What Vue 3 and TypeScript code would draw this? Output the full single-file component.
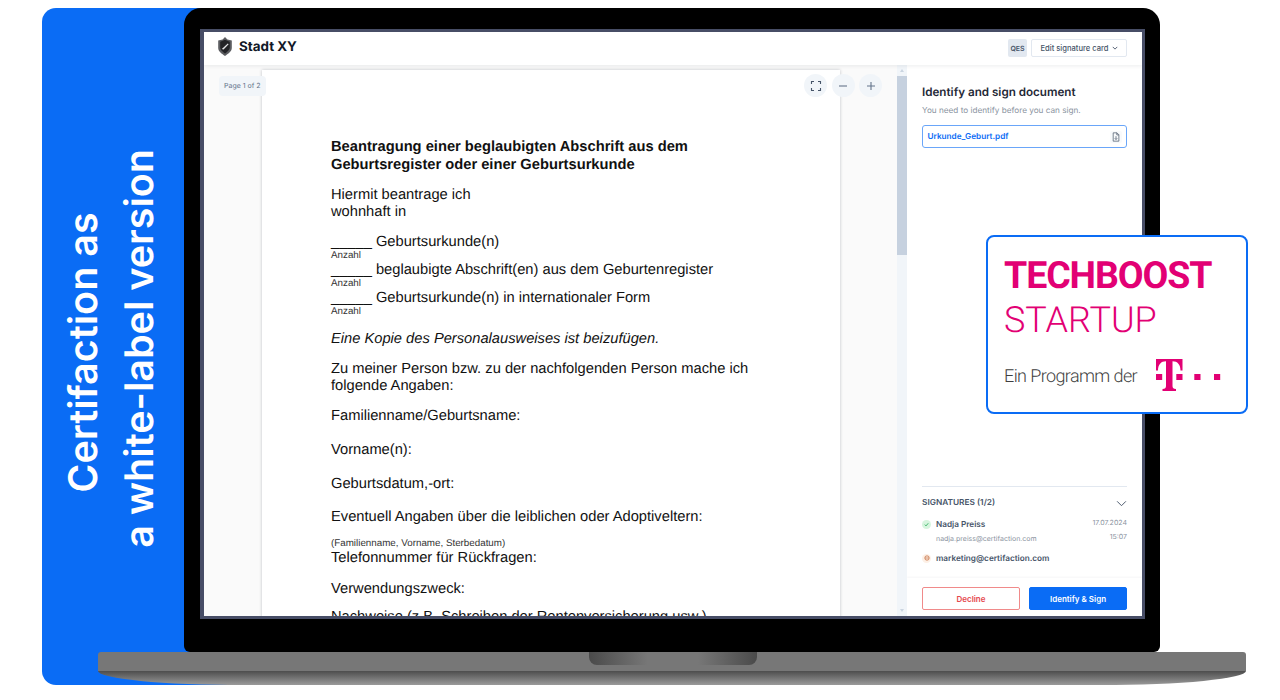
<template>
  <div class="stage">
    <div class="blue-panel">
      <h1 class="claim"><span class="claim-first">Certifaction as</span>a white-label version</h1>
    </div>

    <div class="laptop">
      <div class="screen">
        <header class="topbar">
          <div class="brand">
            <svg class="shield" viewBox="0 0 14 19" width="14" height="19">
              <path d="M7 0 9.4 2.4 13.8 3.4V11C13.8 14.6 10 16.8 7 19 4 16.8 .2 14.6 .2 11V3.4L4.6 2.4Z" fill="#5b5c60" />
              <path d="M7 2.8 11.8 4.8V10.6C11.8 13.2 9.2 15 7 16.4 4.8 15 2.2 13.2 2.2 10.6V4.8Z" fill="#232326" />
              <path d="M3.8 12 9.8 6.6 10.6 7.2 5.6 12.6Z" fill="#e4e4e6" />
            </svg>
            <span>Stadt XY</span>
          </div>
          <div class="top-actions">
            <span class="qes">QES</span>
            <button class="card-btn">
              Edit signature card
              <svg viewBox="0 0 8 8" width="6" height="6"><path d="M1 2.5 4 5.5 7 2.5" fill="none" stroke="#475569" stroke-width="1.2" /></svg>
            </button>
          </div>
        </header>

        <main class="workspace">
          <section class="viewer">
            <span class="page-badge">Page 1 of 2</span>
            <div class="zoom-tools">
              <button class="round-btn">
                <svg viewBox="0 0 12 12" width="12" height="12">
                  <path d="M1.5 4V1.5H4M8 1.5H10.5V4M10.5 8V10.5H8M4 10.5H1.5V8" fill="none" stroke="#475569" stroke-width="1.1" />
                </svg>
              </button>
              <button class="round-btn">
                <svg viewBox="0 0 12 12" width="12" height="12"><path d="M2 6H10" stroke="#64748b" stroke-width="1.1" /></svg>
              </button>
              <button class="round-btn">
                <svg viewBox="0 0 12 12" width="12" height="12"><path d="M2 6H10M6 2V10" stroke="#64748b" stroke-width="1.1" /></svg>
              </button>
            </div>

            <article class="sheet">
              <h2>Beantragung einer beglaubigten Abschrift aus dem<br />Geburtsregister oder einer Geburtsurkunde</h2>
              <p>Hiermit beantrage ich<br />wohnhaft in</p>
              <p>_____ Geburtsurkunde(n)</p>
              <small>Anzahl</small>
              <p class="tight">_____ beglaubigte Abschrift(en) aus dem Geburtenregister</p>
              <small>Anzahl</small>
              <p class="tight">_____ Geburtsurkunde(n) in internationaler Form</p>
              <small>Anzahl</small>
              <p><em>Eine Kopie des Personalausweises ist beizufügen.</em></p>
              <p>Zu meiner Person bzw. zu der nachfolgenden Person mache ich<br />folgende Angaben:</p>
              <p>Familienname/Geburtsname:</p>
              <p class="wide">Vorname(n):</p>
              <p class="wide">Geburtsdatum,-ort:</p>
              <p class="mid">Eventuell Angaben über die leiblichen oder Adoptiveltern:</p>
              <small class="note">(Familienname, Vorname, Sterbedatum)</small>
              <p class="tight">Telefonnummer für Rückfragen:</p>
              <p class="mid2">Verwendungszweck:</p>
              <p class="last">Nachweise (z.B. Schreiben der Rentenversicherung usw.)</p>
            </article>

            <div class="scrollbar">
              <span class="arrow up"></span>
              <span class="thumb"></span>
              <span class="arrow down"></span>
            </div>
          </section>

          <aside class="side">
            <div class="side-body">
              <h3>Identify and sign document</h3>
              <p class="hint">You need to identify before you can sign.</p>
              <div class="file">
                <span>Urkunde_Geburt.pdf</span>
                <i class="file-icon">
                  <svg viewBox="0 0 10 12" width="8" height="10">
                    <path d="M1.5 .8H6.2L8.6 3.2V11.2H1.5ZM6 .8V3.4H8.6M5 5V9M3.4 7.6 5 9.2 6.6 7.6" fill="none" stroke="#475569" stroke-width=".9" />
                  </svg>
                </i>
              </div>
            </div>

            <div class="signatures">
              <div class="sig-title">
                <span>SIGNATURES (1/2)</span>
                <svg viewBox="0 0 12 8" width="11" height="7"><path d="M1 1.5 6 6.5 11 1.5" fill="none" stroke="#475569" stroke-width="1.1" /></svg>
              </div>
              <div class="signer">
                <i class="dot ok">
                  <svg viewBox="0 0 8 8" width="5" height="5"><path d="M1.2 4.2 3.2 6.2 6.8 2" fill="none" stroke="#16a34a" stroke-width="1.2" /></svg>
                </i>
                <div class="who">
                  <b>Nadja Preiss</b>
                  <span>nadja.preiss@certifaction.com</span>
                </div>
                <div class="when">17.07.2024<br />15:07</div>
              </div>
              <div class="signer pending">
                <i class="dot wait">
                  <svg viewBox="0 0 8 8" width="6" height="6"><circle cx="4" cy="4" r="2.9" fill="none" stroke="#c2683a" stroke-width="1" /><path d="M1.5 4H6.5" stroke="#c2683a" stroke-width=".9" /></svg>
                </i>
                <b>marketing@certifaction.com</b>
              </div>
            </div>

            <footer class="actions">
              <button class="decline">Decline</button>
              <button class="sign">Identify &amp; Sign</button>
            </footer>
          </aside>
        </main>
      </div>
    </div>

    <div class="base">
      <div class="deck"><span class="notch"></span></div>
      <div class="lip"></div>
    </div>

    <div class="promo">
      <div class="promo-bold">TECHBOOST</div>
      <div class="promo-thin">STARTUP</div>
      <div class="promo-row">
        <span class="promo-by">Ein Programm der</span>
        <svg class="t-logo" viewBox="0 0 66 32" width="66" height="32">
          <path fill="#e20074" d="M0 0H26.5V11.5H24.5C24.5 5.5 21.5 2.2 16.5 2.2V27C16.5 29 17.5 30 20 30V32H6.5V30C9 30 10 29 10 27V2.2C5 2.2 2 5.5 2 11.5H0Z" />
          <rect fill="#e20074" x="0" y="15" width="6.2" height="6" />
          <rect fill="#e20074" x="20.3" y="15" width="6.2" height="6" />
          <rect fill="#e20074" x="38.3" y="15" width="6.2" height="6" />
          <rect fill="#e20074" x="58" y="15" width="6.2" height="6" />
        </svg>
      </div>
    </div>
  </div>
</template>

<script setup lang="ts">
// static mock, nothing to wire up
</script>

<style>
html,
body {
  margin: 0;
  background: #fff;
}
</style>

<style scoped>
.stage {
  position: relative;
  display: grid;
  width: 1280px;
  height: 700px;
  overflow: hidden;
  background: #fff;
  font-family: Inter, "Liberation Sans", sans-serif;
  text-rendering: geometricPrecision;
}

.blue-panel,
.laptop,
.base {
  grid-area: 1 / 1;
}

.blue-panel {
  display: flex;
  align-items: center;
  box-sizing: border-box;
  width: 198px;
  height: 677px;
  margin: 8px 0 0 42px;
  padding: 4px 0 0 13px;
  background: #0a6cf5;
  border-radius: 14px;
}

.claim {
  margin: 0;
  color: #fff;
  font-size: 39.5px;
  font-weight: 600;
  line-height: 56px;
  text-align: center;
  white-space: nowrap;
  writing-mode: vertical-rl;
  transform: rotate(180deg);
}

.claim-first {
  display: block;
  padding-inline-end: 8px;
}

.laptop {
  box-sizing: border-box;
  width: 976px;
  height: 644px;
  margin: 8px 0 0 184px;
  padding: 21px 15px 33px 16px;
  background: #000;
  border-radius: 17px 17px 6px 6px;
}

.screen {
  display: flex;
  flex-direction: column;
  box-sizing: border-box;
  height: 590px;
  border: 3px solid #474d66;
  border-left-width: 4px;
  background: #fff;
  overflow: hidden;
}

.topbar {
  display: flex;
  flex: none;
  align-items: center;
  justify-content: space-between;
  box-sizing: border-box;
  height: 33px;
  padding: 0 15px 1px 14px;
  background: #fff;
  box-shadow: 0 1px 4px rgba(15, 23, 42, 0.08);
  z-index: 1;
}

.brand {
  display: flex;
  align-items: center;
  gap: 7px;
  margin-bottom: 3px;
  color: #111827;
  font-size: 13.4px;
  font-weight: 700;
}

.top-actions {
  display: flex;
  align-items: center;
  gap: 4px;
}

.qes {
  display: flex;
  align-items: center;
  justify-content: center;
  width: 19px;
  height: 18px;
  border-radius: 2px;
  background: #e2e8f0;
  color: #475569;
  font-size: 7px;
  font-weight: 600;
}

.card-btn {
  display: flex;
  align-items: center;
  justify-content: center;
  gap: 3px;
  box-sizing: border-box;
  width: 96px;
  height: 18px;
  padding: 0;
  border: 1px solid #e2e8f0;
  border-radius: 2px;
  background: #fff;
  color: #475569;
  font: 500 7.6px Inter, sans-serif;
}

.workspace {
  display: flex;
  flex: 1;
  min-height: 0;
}

.viewer {
  position: relative;
  display: flex;
  flex: 1;
  min-width: 0;
  padding: 5px 0 0 58px;
  background: #fafafa;
}

.page-badge {
  position: absolute;
  top: 11px;
  left: 15px;
  padding: 0 5px;
  border-radius: 4px;
  background: #f1f5f9;
  color: #64748b;
  font-size: 7px;
  line-height: 20px;
}

.zoom-tools {
  position: absolute;
  top: 9px;
  left: 600px;
  display: flex;
  gap: 4.5px;
  z-index: 1;
}

.round-btn {
  display: flex;
  align-items: center;
  justify-content: center;
  width: 23px;
  height: 23px;
  padding: 0;
  border: 0;
  border-radius: 50%;
  background: #f1f5f9;
}

.sheet {
  box-sizing: border-box;
  width: 578px;
  height: 560px;
  padding: 68px 0 0 69px;
  background: #fff;
  box-shadow: 0 0 3px rgba(15, 23, 42, 0.25);
  color: #111;
  font-family: "Liberation Sans", Arial, sans-serif;
  font-size: 14.7px;
  line-height: 17px;
  overflow: hidden;
}

.sheet h2 {
  margin: 0;
  font-size: 14.7px;
  font-weight: 700;
  line-height: 18px;
}

.sheet p {
  margin: 13px 0 0;
}

.sheet p.tight {
  margin-top: 0;
}

.sheet p.wide {
  margin-top: 17px;
}

.sheet p.mid {
  margin-top: 16px;
}

.sheet p.mid2 {
  margin-top: 14px;
}

.sheet p.last {
  margin-top: 11px;
}

.sheet small {
  display: block;
  padding-bottom: 1px;
  color: #333;
  font-size: 9.8px;
  line-height: 10px;
}

.sheet small.note {
  margin-top: 13px;
}

.scrollbar {
  display: flex;
  flex: none;
  flex-direction: column;
  align-items: center;
  width: 10px;
  margin-left: 57px;
  margin-top: -5px;
  background: #f1f5f9;
}

.arrow {
  flex: none;
  width: 0;
  height: 0;
  margin: 4px 0;
  border-left: 2.5px solid transparent;
  border-right: 2.5px solid transparent;
}

.arrow.up {
  border-bottom: 3px solid #cbd5e1;
}

.arrow.down {
  margin-top: auto;
  border-top: 3px solid #cbd5e1;
}

.thumb {
  width: 100%;
  height: 179px;
  background: #c6d1df;
}

.side {
  display: flex;
  flex: none;
  flex-direction: column;
  width: 235px;
  background: #fff;
}

.side-body {
  flex: 1;
  padding: 20px 15px 0;
}

.side-body h3 {
  margin: 0;
  color: #1f2937;
  font-size: 11.65px;
  font-weight: 600;
  line-height: 14px;
}

.hint {
  margin: 5px 0 0;
  color: #8a93a0;
  font-size: 8.2px;
  line-height: 12px;
}

.file {
  display: flex;
  align-items: center;
  justify-content: space-between;
  box-sizing: border-box;
  height: 23px;
  margin-top: 9px;
  padding: 0 4px 2px 4.5px;
  border: 1.5px solid #6aa6f9;
  border-radius: 3px;
  color: #0a6cf5;
  font-size: 8.2px;
  font-weight: 600;
}

.file-icon {
  display: flex;
  align-items: center;
  justify-content: center;
  width: 12px;
  height: 12px;
  margin-bottom: -3px;
  border-radius: 2px;
  background: #f8fafc;
}

.signatures {
  margin: 0 15px;
  padding-top: 9px;
  border-top: 1px solid #e2e8f0;
  height: 82px;
}

.sig-title {
  display: flex;
  align-items: center;
  justify-content: space-between;
  color: #475569;
  font-size: 8.3px;
  font-weight: 600;
  line-height: 14px;
}

.signer {
  display: flex;
  align-items: flex-start;
  gap: 5px;
  margin-top: 8px;
}

.signer b {
  color: #475569;
  font-size: 8.2px;
  font-weight: 600;
  line-height: 12px;
}

.signer.pending {
  align-items: center;
  margin-top: 8px;
}

.dot {
  display: flex;
  flex: none;
  align-items: center;
  justify-content: center;
  width: 9px;
  height: 9px;
  margin-top: 2px;
  border-radius: 50%;
}

.dot.ok {
  background: #d6f5de;
}

.dot.wait {
  margin-top: 0;
  background: #fdf0e6;
}

.who {
  display: flex;
  flex: 1;
  flex-direction: column;
  gap: 3px;
}

.who span {
  color: #8a93a0;
  font-size: 7px;
  line-height: 11px;
}

.when {
  margin-top: -2px;
  color: #8a93a0;
  font-size: 7px;
  line-height: 14px;
  text-align: right;
}

.actions {
  display: flex;
  flex: none;
  gap: 9px;
  box-sizing: border-box;
  height: 38px;
  padding: 9px 15px 0;
  box-shadow: 0 -1px 2px rgba(15, 23, 42, 0.04);
}

.actions button {
  flex: 1;
  height: 23px;
  padding: 0;
  border-radius: 2px;
  font: 600 8px Inter, sans-serif;
}

.decline {
  border: 1px solid #f08a8a;
  background: #fff;
  color: #e5484d;
}

.sign {
  border: 1px solid #0a6cf5;
  background: #0a6cf5;
  color: #fff;
}

.base {
  width: 1148px;
  height: 33px;
  margin: 652px 0 0 98px;
}

.deck {
  position: relative;
  height: 19px;
  background: #777;
  border-radius: 3px 3px 0 0;
}

.notch {
  position: absolute;
  top: 0;
  left: 491px;
  width: 168px;
  height: 13px;
  border-radius: 0 0 8px 8px;
  background: linear-gradient(90deg, #4a4a4a, #777 35%, #777 65%, #4a4a4a);
}

.lip {
  height: 14px;
  background: linear-gradient(180deg, #4d4d4d, #9a9a9a);
  border-radius: 0 0 145px 145px / 0 0 14px 14px;
}

.promo {
  position: absolute;
  top: 235px;
  left: 986px;
  box-sizing: border-box;
  width: 262px;
  height: 179px;
  padding: 17px 16px 0;
  border: 2px solid #0a6cf5;
  border-radius: 8px;
  background: #fff;
  color: #e20074;
}

.promo-bold {
  font-family: Roboto, "Liberation Sans", sans-serif;
  font-size: 37.5px;
  font-weight: 700;
  line-height: 44px;
  letter-spacing: -1.1px;
}

.promo-thin {
  margin-top: 2px;
  font-family: Roboto, "Liberation Sans", sans-serif;
  font-size: 36px;
  font-weight: 300;
  line-height: 40px;
}

.promo-row {
  display: flex;
  align-items: center;
  gap: 19px;
  margin-top: 19px;
  color: #3f3f3f;
  font-family: Roboto, sans-serif;
  font-size: 18px;
  font-weight: 300;
  letter-spacing: -0.6px;
}

.promo-by {
  padding-top: 2px;
}
</style>
